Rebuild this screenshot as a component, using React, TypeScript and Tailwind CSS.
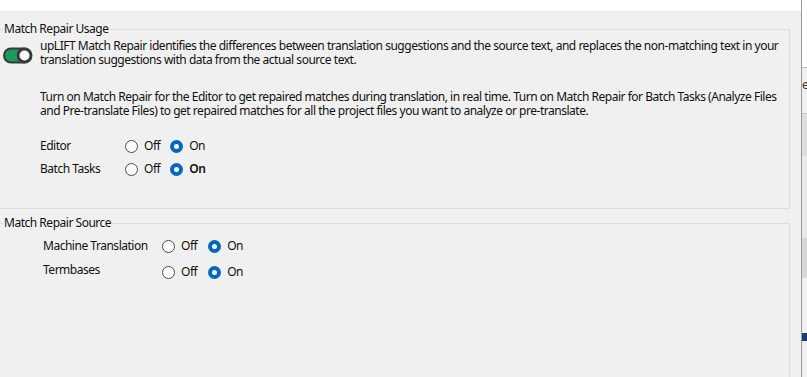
import React from 'react';

function Toggle() {
  return (
    <svg width="30" height="17" viewBox="0 0 30 17" className="shrink-0">
      <rect x="1" y="1.5" width="27" height="14" rx="7" fill="#1a9b5c" stroke="#3a3a3a" strokeWidth="2" />
      <circle cx="21.5" cy="8.5" r="6.5" fill="#ffffff" stroke="#3a3a3a" strokeWidth="3" />
    </svg>
  );
}

function Radio({ checked, label, bold }: { checked: boolean; label: string; bold?: boolean }) {
  return (
    <div className="flex items-center gap-[6px]">
      {checked ? (
        <span className="w-[13px] h-[13px] rounded-full bg-[#0067c0] flex items-center justify-center">
          <span className="w-[5px] h-[5px] rounded-full bg-white" />
        </span>
      ) : (
        <span className="w-[13px] h-[13px] rounded-full border border-[#4a4a4a] bg-white" />
      )}
      <span className={bold ? 'font-semibold' : ''}>{label}</span>
    </div>
  );
}

function OptionRow({ label, labelW, gap, boldOn, labelShift }: { label: string; labelW: string; gap: string; boldOn?: boolean; labelShift?: boolean }) {
  return (
    <div className="flex items-center h-[20px]">
      <span className={`${labelW} shrink-0 whitespace-nowrap ${labelShift ? '-translate-y-[2px]' : ''}`}>{label}</span>
      <div className={`flex items-center ${gap}`}>
        <Radio checked={false} label="Off" />
        <Radio checked={true} label="On" bold={boldOn} />
      </div>
    </div>
  );
}

export default function App() {
  return (
    <div className="w-[807px] h-[377px] flex overflow-hidden text-[12px] leading-[14px] tracking-[-0.48px] text-[#111] font-['Noto_Sans',sans-serif]">
      <div className="w-[801px] flex flex-col bg-[#f0f0f0]">
        <div className="h-[11px] bg-white shrink-0" />
        <fieldset className="mt-[10px] w-[790px] h-[188px] border border-l-0 border-[#dcdcdc] shrink-0">
          <legend className="ml-[3px] px-[1px] leading-[16px]">Match Repair Usage</legend>
          <div className="pt-[2px]">
            <div className="flex items-start">
              <div className="w-[40px] pl-[3px] pt-[8px]">
                <Toggle />
              </div>
              <p className="whitespace-nowrap">
                upLIFT Match Repair identifies the differences between translation suggestions and the source text, and replaces the non-matching text in your
                <br />
                translation suggestions with data from the actual source text.
              </p>
            </div>
            <p className="ml-[40px] mt-[23px] whitespace-nowrap">
              Turn on Match Repair for the Editor to get repaired matches during translation, in real time. Turn on Match Repair for Batch Tasks (Analyze Files
              <br />
              and Pre-translate Files) to get repaired matches for all the project files you want to analyze or pre-translate.
            </p>
            <div className="ml-[40px] mt-[18px] flex flex-col gap-[3px]">
              <OptionRow label="Editor" labelW="w-[85px]" gap="gap-[10px]" />
              <OptionRow label="Batch Tasks" labelW="w-[85px]" gap="gap-[10px]" boldOn />
            </div>
          </div>
        </fieldset>
        <fieldset className="mt-[6px] w-[790px] flex-1 border border-l-0 border-b-0 border-[#dcdcdc]">
          <legend className="ml-[3px] px-[1px] leading-[16px]">Match Repair Source</legend>
          <div className="ml-[43px] mt-[5px] flex flex-col gap-[6px]">
            <OptionRow label="Machine Translation" labelW="w-[119px]" gap="gap-[11px]" />
            <OptionRow label="Termbases" labelW="w-[119px]" gap="gap-[11px]" labelShift />
          </div>
        </fieldset>
      </div>
      <div className="w-px bg-[#9a9a9a] shrink-0" />
      <div className="w-[5px] flex flex-col shrink-0">
        <div className="h-[67px] bg-white" />
        <div className="h-px bg-[#b8b8b8]" />
        <div className="h-[45px] bg-[#f0f0f0] text-[12px] leading-[34px] overflow-hidden text-[#333]">er</div>
        <div className="h-px bg-[#c8c8c8]" />
        <div className="h-[42px] bg-[#dedede]" />
        <div className="h-[82px] bg-[#eaeaea]" />
        <div className="h-[40px] bg-[#d6d6d6]" />
        <div className="h-[55px] bg-[#f0f0f0]" />
        <div className="h-[8px] bg-[#1a3a7a]" />
        <div className="flex-1 bg-[#f0f0f0]" />
      </div>
    </div>
  );
}
